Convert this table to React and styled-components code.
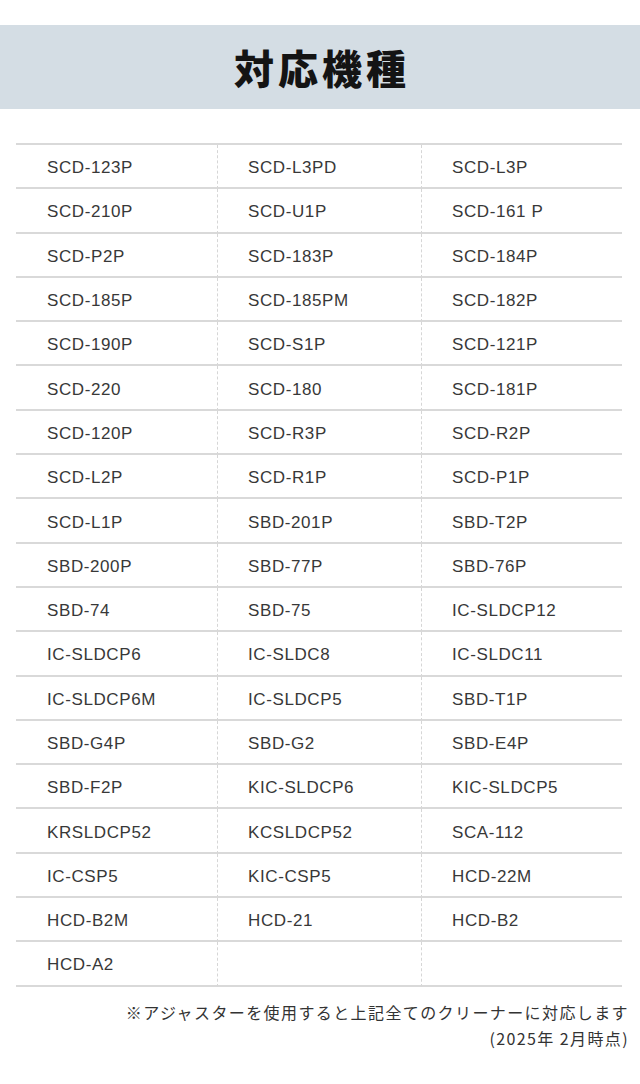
import React from "react";
import styled, { createGlobalStyle } from "styled-components";

const Global = createGlobalStyle`
  html, body { margin: 0; padding: 0; background: #fff; }
  body { font-family: "Liberation Sans", "Noto Sans CJK JP", sans-serif; color: #333; }
`;

const Page = styled.div`
  width: 640px;
  padding-top: 25px;
  box-sizing: border-box;
`;

const Banner = styled.header`
  height: 84px;
  background: #d4dde4;
  display: flex;
  align-items: center;
  justify-content: center;
`;

const Title = styled.h1`
  margin: 0;
  font-family: "Noto Sans CJK JP", sans-serif;
  font-weight: 900;
  font-size: 40px;
  letter-spacing: 4px;
  color: #141414;
  line-height: 1;
  padding-left: 4px;
`;

const Table = styled.div`
  margin: 34px 18px 0 16px;
  display: grid;
  grid-template-columns: 201px 204px 1fr;
  border-top: 2px solid #d9d9d9;
`;

const Cell = styled.div`
  height: 44.3px;
  box-sizing: border-box;
  border-bottom: 2px solid #d9d9d9;
  border-left: ${(p) => (p.$first ? "none" : "1px dashed #d6d6d6")};
  display: flex;
  align-items: center;
  padding-top: 4px;
  padding-left: ${(p) => (p.$first ? "31px" : "30px")};
  font-size: 17px;
  letter-spacing: 0.6px;
  color: #383838;
`;

const Notes = styled.div`
  margin-top: 12px;
  padding-right: 11px;
  text-align: right;
  font-family: "Noto Sans CJK JP", sans-serif;
  font-size: 16px;
  line-height: 26px;
  letter-spacing: 1.4px;
  color: #333;
`;

const Note = styled.div``;

const models = [
  "SCD-123P", "SCD-L3PD", "SCD-L3P",
  "SCD-210P", "SCD-U1P", "SCD-161 P",
  "SCD-P2P", "SCD-183P", "SCD-184P",
  "SCD-185P", "SCD-185PM", "SCD-182P",
  "SCD-190P", "SCD-S1P", "SCD-121P",
  "SCD-220", "SCD-180", "SCD-181P",
  "SCD-120P", "SCD-R3P", "SCD-R2P",
  "SCD-L2P", "SCD-R1P", "SCD-P1P",
  "SCD-L1P", "SBD-201P", "SBD-T2P",
  "SBD-200P", "SBD-77P", "SBD-76P",
  "SBD-74", "SBD-75", "IC-SLDCP12",
  "IC-SLDCP6", "IC-SLDC8", "IC-SLDC11",
  "IC-SLDCP6M", "IC-SLDCP5", "SBD-T1P",
  "SBD-G4P", "SBD-G2", "SBD-E4P",
  "SBD-F2P", "KIC-SLDCP6", "KIC-SLDCP5",
  "KRSLDCP52", "KCSLDCP52", "SCA-112",
  "IC-CSP5", "KIC-CSP5", "HCD-22M",
  "HCD-B2M", "HCD-21", "HCD-B2",
  "HCD-A2", "", "",
];

export default function App() {
  return (
    <Page>
      <Global />
      <Banner>
        <Title>対応機種</Title>
      </Banner>
      <Table>
        {models.map((m, i) => (
          <Cell key={i} $first={i % 3 === 0}>
            {m}
          </Cell>
        ))}
      </Table>
      <Notes>
        <Note>※アジャスターを使用すると上記全てのクリーナーに対応します</Note>
        <Note>(2025年 2月時点)</Note>
      </Notes>
    </Page>
  );
}
